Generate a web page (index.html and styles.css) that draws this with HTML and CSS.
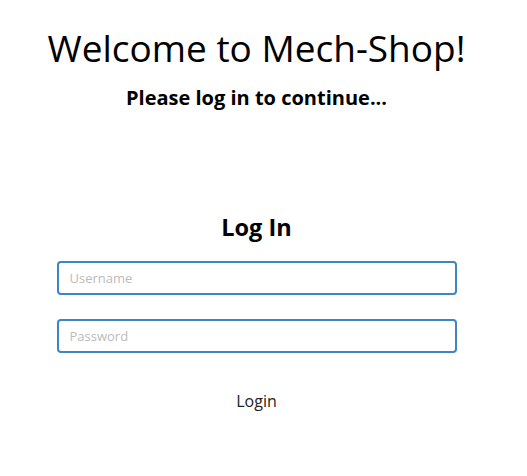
FILE: index.html
```html
<!DOCTYPE html>
<html>
<head>
<meta charset="utf-8">
<link rel="stylesheet" href="styles.css">
</head>
<body>
<div class="page">
  <header class="hero">
    <h1 class="title">Welcome to Mech-Shop!</h1>
    <h2 class="subtitle">Please log in to continue...</h2>
  </header>
  <form class="login">
    <h3 class="login-title">Log In</h3>
    <input class="field" type="text" placeholder="Username">
    <input class="field" type="password" placeholder="Password">
    <button class="btn" type="button">Login</button>
  </form>
</div>
</body>
</html>
```
FILE: styles.css
```css
* { box-sizing: border-box; }
html, body { margin: 0; padding: 0; background: #fff; }
body { font-family: "Open Sans", "Noto Sans", sans-serif; color: #000; }
.page { width: 513px; display: flex; flex-direction: column; align-items: center; }
.hero { display: flex; flex-direction: column; align-items: center; padding-top: 24px; }
.title { margin: 0; font-size: 37px; font-weight: 400; line-height: 48px; }
.subtitle { margin: 13px 0 0; font-size: 20px; font-weight: 700; line-height: 26px; }
.login { display: flex; flex-direction: column; align-items: center; margin-top: 100px; width: 400px; }
.login-title { margin: 0; font-size: 23.5px; font-weight: 700; line-height: 32px; }
.field { width: 400px; height: 34px; margin-top: 18px; border: 2px solid #3d85c6; border-radius: 4px; padding: 0 11px; font-family: inherit; font-size: 13px; color: #333; outline: none; }
.field + .field { margin-top: 24px; }
.field::placeholder { color: #bbbbbb; }
.btn { margin-top: 33px; background: none; border: none; font-family: inherit; font-size: 16px; color: #222; padding: 4px 8px; }
```
